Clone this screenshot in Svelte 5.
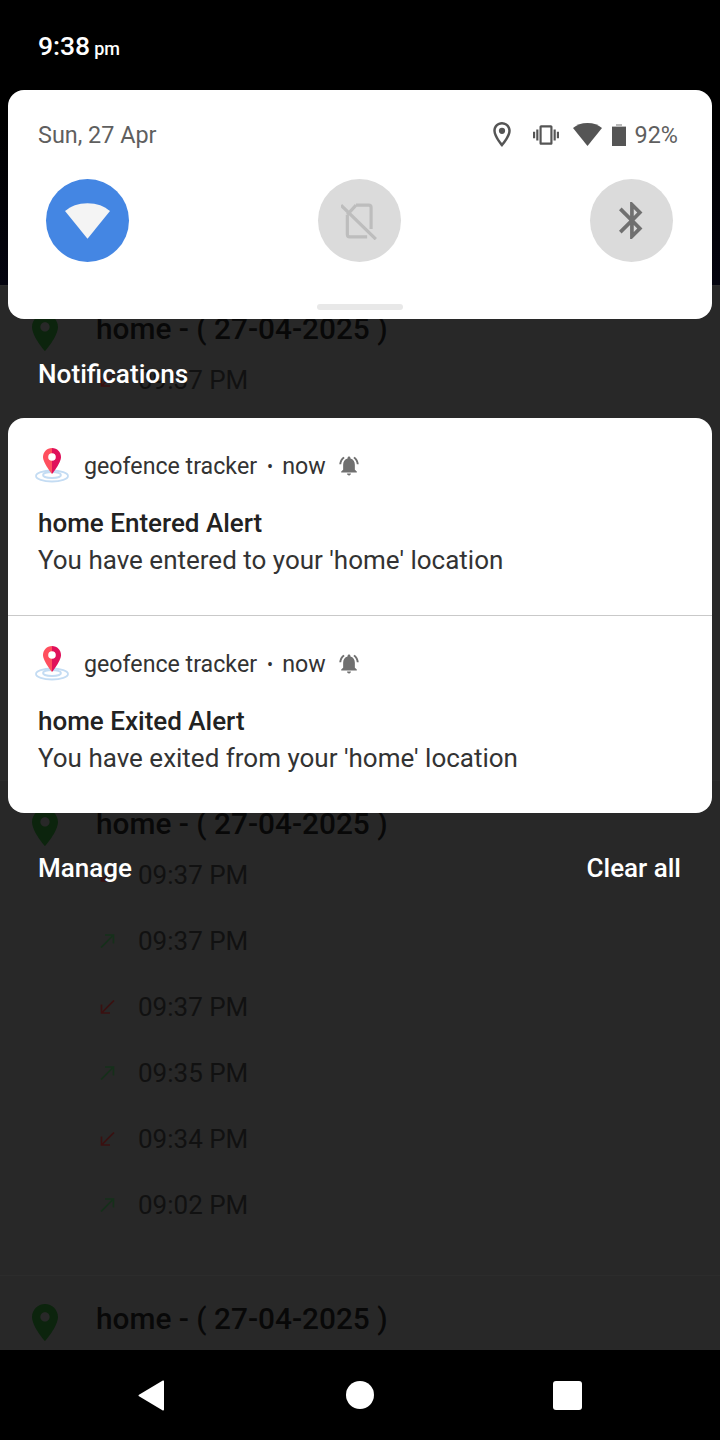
<script>
  const groups = [
    [["down", "09:37 PM"]],
    [["down", "09:37 PM"], ["up", "09:37 PM"], ["down", "09:37 PM"], ["up", "09:35 PM"], ["down", "09:34 PM"], ["up", "09:02 PM"]],
    []
  ];

  const alerts = [
    { title: "home Entered Alert", body: "You have entered to your 'home' location" },
    { title: "home Exited Alert", body: "You have exited from your 'home' location" }
  ];
</script>

<div class="screen">
  <div class="app">
    {#each groups as rows}
      <section class="group">
        <div class="group-head">
          <svg class="pin" viewBox="5 2 14 20" aria-hidden="true">
            <path d="M12 2C8.13 2 5 5.13 5 9c0 5.25 7 13 7 13s7-7.75 7-13c0-3.87-3.13-7-7-7zm0 9.5c-1.38 0-2.5-1.12-2.5-2.5s1.12-2.5 2.5-2.5 2.5 1.12 2.5 2.5-1.12 2.5-2.5 2.5z" />
          </svg>
          <span>home - ( 27-04-2025 )</span>
        </div>
        {#each rows as [dir, time]}
          <div class="row">
            <svg class="arrow {dir}" viewBox="0 0 15 14" aria-hidden="true">
              {#if dir === "up"}
                <path d="M1 13.500L13.500 1M5 1h8.500v8.500" />
              {:else}
                <path d="M14 .5L1.500 13M10 13H1.500V4.500" />
              {/if}
            </svg>
            <span>{time}</span>
          </div>
        {/each}
      </section>
    {/each}
  </div>

  <div class="shade">
    <div class="status">
      <span class="clock">9:38</span>
      <span class="ampm">pm</span>
    </div>

    <div class="panel">
      <div class="panel-top">
        <span class="date">Sun, 27 Apr</span>
        <div class="sys">
          <svg class="ic-loc" viewBox="5 2 14 20" aria-hidden="true">
            <path d="M12 2C8.13 2 5 5.13 5 9c0 5.25 7 13 7 13s7-7.75 7-13c0-3.87-3.13-7-7-7zM7 9c0-2.76 2.24-5 5-5s5 2.24 5 5c0 2.88-2.88 7.19-5 9.88C9.92 16.21 7 11.85 7 9z" />
            <circle cx="12" cy="9" r="2.5" />
          </svg>
          <svg class="ic-vib" viewBox="0 3 24 18" aria-hidden="true">
            <path d="M0 15h2V9H0v6zm3 2h2V7H3v10zm19-8v6h2V9h-2zm-3 8h2V7h-2v10zM16.5 3h-9C6.67 3 6 3.67 6 4.5v15c0 .83.67 1.5 1.5 1.5h9c.83 0 1.5-.67 1.5-1.5v-15c0-.83-.67-1.5-1.5-1.5zM16 19H8V5h8v14z" />
          </svg>
          <svg class="ic-wifi" viewBox="0 3 24 19" aria-hidden="true">
            <path d="M12 3C7 3 3 4.6 0 7.2L12 22 24 7.2C21 4.6 17 3 12 3z" />
          </svg>
          <svg class="ic-batt" viewBox="0 0 14 22" aria-hidden="true">
            <path class="nub" d="M4 0h6v2h4v3H0V2h4z" />
            <path d="M0 3h14v19H0z" />
          </svg>
          <span class="pct">92%</span>
        </div>
      </div>

      <div class="toggles">
        <div class="toggle on">
          <svg viewBox="0 3 24 19" aria-hidden="true">
            <path d="M12 3C7 3 3 4.6 0 7.2L12 22 24 7.2C21 4.6 17 3 12 3z" />
          </svg>
        </div>
        <div class="toggle off">
          <svg viewBox="0 0 24 24" aria-hidden="true">
            <path d="M9.500 2H17.500a1.500 1.500 0 0 1 1.500 1.500V17M4 8V20.500a1.500 1.500 0 0 0 1.500 1.500H16.500M0 2L22 23.500M9.500 2L4 8" />
          </svg>
        </div>
        <div class="toggle bt">
          <svg viewBox="5 2 13 20" aria-hidden="true">
            <path d="M17.71 7.71L12 2h-1v7.59L6.41 5 5 6.41 10.59 12 5 17.59 6.41 19 11 14.41V22h1l5.71-5.71-4.3-4.29 4.3-4.29zM13 5.83l1.88 1.88L13 9.59V5.83zm1.88 10.46L13 18.17v-3.76l1.88 1.88z" />
          </svg>
        </div>
      </div>

      <div class="handle"></div>
    </div>

    <div class="label">Notifications</div>

    <div class="cards">
      {#each alerts as alert}
        <article class="note">
          <div class="note-head">
            <svg class="logo" viewBox="0 0 36 36" aria-hidden="true">
              <g fill="none" stroke="#c4dcf3" stroke-width="1.8">
                <ellipse cx="18" cy="28" rx="16" ry="5.500" />
                <ellipse cx="18" cy="27" rx="9" ry="3" />
              </g>
              <g transform="translate(0 -2)">
                <path fill="#ff4f5e" d="M18 2C12.8 2 9 6 9 11c0 6 9 17 9 17z" />
                <path fill="#e0105a" d="M18 2c5.2 0 9 4 9 9 0 6-9 17-9 17z" />
                <circle cx="18" cy="11" r="3.800" fill="#fff" />
              </g>
            </svg>
            <span class="app-name">geofence tracker</span>
            <span class="dot">•</span>
            <span class="app-name">now</span>
            <svg class="bell" viewBox="2 2 20 20.5" aria-hidden="true">
              <path d="M7.58 4.08L6.15 2.65C3.75 4.48 2.17 7.3 2.03 10.5h2c.15-2.65 1.51-4.97 3.55-6.42zm12.39 6.42h2c-.15-3.2-1.73-6.02-4.12-7.85l-1.42 1.43c2.02 1.45 3.39 3.77 3.54 6.42zM18 11c0-3.07-1.64-5.64-4.5-6.32V4c0-.83-.67-1.5-1.5-1.5s-1.5.67-1.5 1.5v.68C7.63 5.36 6 7.92 6 11v5l-2 2v1h16v-1l-2-2v-5zm-6 11c.14 0 .27-.01.4-.04.65-.14 1.18-.58 1.44-1.18.1-.24.15-.5.15-.78h-4c.01 1.1.9 2 2.01 2z" />
            </svg>
          </div>
          <div class="note-title">{alert.title}</div>
          <div class="note-body">{alert.body}</div>
        </article>
      {/each}
    </div>

    <div class="actions">
      <span>Manage</span>
      <span>Clear all</span>
    </div>
  </div>

  <nav class="nav">
    <svg class="back" viewBox="0 0 27 31" aria-hidden="true">
      <path d="M26 1.500v28a1 1 0 0 1-1.600.8L1 16.300a1 1 0 0 1 0-1.600L24.400.7A1 1 0 0 1 26 1.500z" />
    </svg>
    <div class="home"></div>
    <div class="recent"></div>
  </nav>
</div>

<style>
  :global(body) {
    margin: 0;
    background: #000;
  }

  .screen {
    position: relative;
    width: 720px;
    height: 1440px;
    overflow: hidden;
    background: linear-gradient(#000 120px, #04040f 285px);
    font-family: Roboto, "Noto Sans", sans-serif;
  }

  .app {
    padding-top: 285px;
  }

  .group {
    height: 495px;
    box-sizing: border-box;
    padding-top: 21px;
    background: #282828;
    border-top: 1px solid #2c2c2c;
  }

  .group-head {
    display: flex;
    align-items: center;
    gap: 38px;
    height: 42px;
    padding-left: 32px;
    font-size: 29.8px;
    font-weight: 500;
    color: #080808;
  }

  .pin {
    width: 26px;
    height: 37px;
    margin-top: 9px;
    fill: #0c240d;
  }

  .row {
    display: flex;
    align-items: center;
    gap: 23px;
    height: 66px;
    padding-left: 100px;
    font-size: 26px;
    color: #111;
  }

  .group-head + .row {
    margin-top: -2px;
  }

  .arrow {
    width: 15px;
    height: 14px;
    fill: none;
    stroke-width: 1.6;
  }

  .arrow.up {
    stroke: #15301a;
  }

  .arrow.down {
    stroke: #3a1010;
  }

  .shade {
    position: absolute;
    inset: 0 0 90px;
    display: flex;
    flex-direction: column;
  }

  .status {
    display: flex;
    align-items: baseline;
    gap: 4px;
    height: 90px;
    box-sizing: border-box;
    padding: 30px 38px 0;
    color: #fff;
    font-weight: 500;
  }

  .clock {
    font-size: 26.500px;
  }

  .ampm {
    font-size: 18px;
  }

  .panel {
    position: relative;
    height: 229px;
    margin: 0 8px;
    box-sizing: border-box;
    padding: 0 30px;
    background: #fff;
    border-radius: 16px;
  }

  .panel-top {
    display: flex;
    align-items: center;
    justify-content: space-between;
    height: 89px;
    color: #5f5f5f;
    font-size: 23.400px;
  }

  .sys {
    display: flex;
    align-items: center;
    margin-right: 4px;
    fill: #555;
  }

  .ic-loc {
    width: 18px;
    height: 25px;
    margin-right: 1px;
  }

  .ic-vib {
    width: 26px;
    height: 20px;
    margin-left: 21px;
  }

  .ic-wifi {
    width: 29px;
    height: 23px;
    margin-left: 14px;
  }

  .ic-batt {
    width: 14px;
    height: 22px;
    margin-left: 10px;
  }

  .nub {
    fill: #bbb;
  }

  .pct {
    margin-left: 9px;
  }

  .toggles {
    display: flex;
    justify-content: space-between;
    padding: 0 9px 0 8px;
  }

  .toggle {
    display: flex;
    align-items: center;
    justify-content: center;
    width: 83px;
    height: 83px;
    border-radius: 50%;
    background: #dbdbdb;
  }

  .toggle.on {
    background: #4486e3;
    fill: #f4f4f4;
  }

  .toggle.on svg {
    width: 45px;
    height: 36px;
  }

  .toggle.off svg {
    width: 38px;
    height: 38px;
    fill: none;
    stroke: #bdbdbd;
    stroke-width: 2;
  }

  .toggle.bt {
    fill: #707070;
  }

  .toggle.bt svg {
    width: 24px;
    height: 37px;
    margin: -1px 0 0 -2px;
  }

  .handle {
    position: absolute;
    left: 309px;
    bottom: 9px;
    width: 86px;
    height: 6px;
    border-radius: 3px;
    background: #e8e8e8;
  }

  .label {
    display: flex;
    align-items: center;
    height: 99px;
    box-sizing: border-box;
    padding: 10px 38px 0;
    color: #fff;
    font-size: 26.200px;
    font-weight: 500;
  }

  .cards {
    margin: 0 8px;
    background: #fff;
    border-radius: 16px;
    overflow: hidden;
  }

  .note {
    height: 197px;
    box-sizing: border-box;
    padding: 0 30px;
  }

  .note + .note {
    height: 198px;
    border-top: 1px solid #c9c9c9;
  }

  .note-head {
    display: flex;
    align-items: center;
    height: 96px;
    box-sizing: border-box;
    color: #333;
    font-size: 23.200px;
  }

  .logo {
    width: 36px;
    height: 36px;
    margin: 0 14px 0 -4px;
  }

  .dot {
    margin: 0 9px 0 10px;
    font-size: 18px;
  }

  .bell {
    width: 20px;
    height: 20px;
    margin-left: 13px;
    fill: #707070;
  }

  .note-title {
    margin-top: -4px;
    color: #222;
    font-size: 26px;
    font-weight: 500;
    line-height: 27px;
  }

  .note-body {
    margin-top: 9px;
    color: #333;
    font-size: 26px;
    line-height: 29px;
  }

  .actions {
    display: flex;
    justify-content: space-between;
    height: 60px;
    padding: 0 39px 0 38px;
    align-items: center;
    margin-top: 25px;
    color: #fff;
    font-size: 26px;
    font-weight: 500;
  }

  .nav {
    position: absolute;
    left: 0;
    right: 0;
    bottom: 0;
    height: 90px;
    background: #000;
    fill: #fff;
  }

  .back {
    position: absolute;
    left: 138px;
    top: 30px;
    width: 27px;
    height: 31px;
  }

  .home {
    position: absolute;
    left: 346px;
    top: 31px;
    width: 28px;
    height: 28px;
    border-radius: 50%;
    background: #fff;
  }

  .recent {
    position: absolute;
    left: 553px;
    top: 31px;
    width: 29px;
    height: 29px;
    border-radius: 3px;
    background: #fff;
  }
</style>
